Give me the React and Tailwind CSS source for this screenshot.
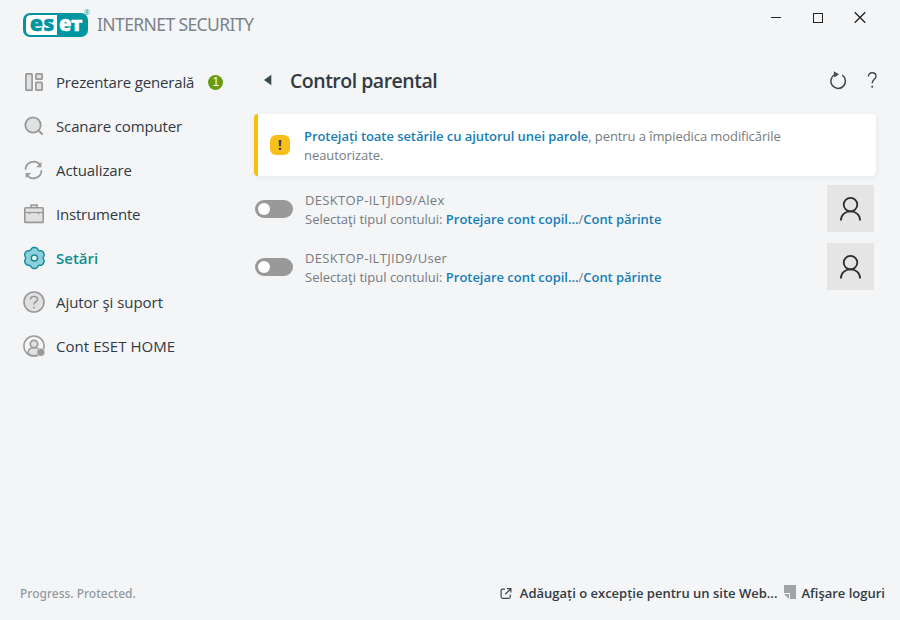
import { useState } from "react";

// six rounded lobes around the settings gear
const gearPoints = Array.from({ length: 72 }, (_, i) => {
  const a = (i * Math.PI) / 36;
  const dip = ((1 - Math.cos(6 * a)) / 2) ** 2;
  const r = 10.5 - 1.8 * dip;
  return `${(11.4 + r * Math.sin(a)).toFixed(2)},${(11 - r * Math.cos(a)).toFixed(2)}`;
}).join(" ");

const OverviewIcon = () => (
  <svg width="22" height="22" viewBox="0 0 22 22" fill="#e0e1e3" stroke="#999" strokeWidth="1.7">
    <rect x="2.9" y="2.9" width="6.2" height="16.2" rx="0.7" />
    <rect x="12.9" y="2.9" width="6.2" height="5.2" rx="0.7" />
    <rect x="12.9" y="11.4" width="6.2" height="7.7" rx="0.7" />
  </svg>
);

const ScanIcon = () => (
  <svg width="22" height="22" viewBox="0 0 22 22" fill="#e0e1e3" stroke="#999" strokeWidth="1.8">
    <circle cx="10" cy="10" r="7.7" />
    <path d="M15.6 15.6L19.6 19.5" strokeWidth="2.1" />
  </svg>
);

const UpdateIcon = () => (
  <svg width="22" height="22" viewBox="0 0 22 22" fill="none" stroke="#999" strokeWidth="1.7">
    <path d="M2.5 10.8A8.2 8.2 0 0 1 17.2 5.9" />
    <path d="M18.5 11.2A8.2 8.2 0 0 1 3.8 16.1" />
    <path d="M18.4 2.9V8.3H13.2Z" fill="#999" stroke="none" />
    <path d="M2.6 19.3V13.9H8.1Z" fill="#999" stroke="none" />
  </svg>
);

const ToolsIcon = () => (
  <svg width="22" height="22" viewBox="0 0 22 22" fill="#e0e1e3" stroke="#999" strokeWidth="1.6">
    <path d="M8 4.7V2H14V4.7" />
    <rect x="1.8" y="4.8" width="18.4" height="14.6" rx="0.7" />
    <path d="M2 9.5H20" strokeWidth="1.2" />
    <path d="M6.5 9V11.3M15.5 9V11.3" strokeWidth="1.4" />
  </svg>
);

const SettingsIcon = () => (
  <svg width="22" height="22" viewBox="0 0 22 22" overflow="visible" stroke="#128c96" strokeWidth="1.4">
    <polygon points={gearPoints} fill="#8bd0da" strokeLinejoin="round" />
    <circle cx="11.4" cy="11" r="3.1" fill="#f3f5f7" strokeWidth="1.5" />
  </svg>
);

const HelpIcon = () => (
  <svg width="22" height="22" viewBox="0 0 22 22" fill="none" stroke="#999" strokeWidth="1.6">
    <circle cx="11" cy="11" r="10" fill="#e0e1e3" />
    <path d="M7.4 8.6C7.4 6.6 8.9 5.5 11 5.5S14.6 6.7 14.6 8.4C14.6 10.8 11 10.7 11 13.4" strokeWidth="1.7" />
    <circle cx="11" cy="16.4" r="1" fill="#999" stroke="none" />
  </svg>
);

const AccountIcon = () => (
  <svg width="22" height="22" viewBox="0 0 22 22" fill="none" stroke="#999" strokeWidth="1.5">
    <circle cx="11" cy="11" r="10.1" />
    <path d="M5 18.5C5 14.6 7.2 12.6 11 12.6S17 14.6 17 18.5C13.4 21.3 8.6 21.3 5 18.5Z" fill="#e0e1e3" />
    <circle cx="11" cy="9" r="3.7" fill="#e0e1e3" strokeWidth="1.7" />
    <circle cx="17.8" cy="17.3" r="4" fill="#999" stroke="#f3f5f7" strokeWidth="0.5" />
  </svg>
);

const menu = [
  { label: "Prezentare generală", icon: OverviewIcon, badge: 1, tracking: "tracking-[-0.15px]" },
  { label: "Scanare computer", icon: ScanIcon, tracking: "tracking-[-0.13px]" },
  { label: "Actualizare", icon: UpdateIcon, tracking: "tracking-[-0.1px]" },
  { label: "Instrumente", icon: ToolsIcon, tracking: "tracking-[-0.2px]" },
  { label: "Setări", icon: SettingsIcon, tracking: "tracking-normal", active: true },
  { label: "Ajutor şi suport", icon: HelpIcon, tracking: "tracking-[-0.05px]" },
  { label: "Cont ESET HOME", icon: AccountIcon, tracking: "tracking-[0.05px]" },
];

const Logo = () => (
  <svg width="69" height="36" viewBox="0 -6 69 36">
    <rect x="0" y="5" width="65" height="24" rx="7" fill="#0096a1" />
    <path d="M8 7H34V27H8Q3 27 3 22V12Q3 7 8 7Z" fill="#fff" />
    <g fontFamily="Open Sans, sans-serif" fontWeight="800" fontSize="21">
      <text x="6.8" y="23" fill="#0096a1" stroke="#0096a1" strokeWidth="0.3" textLength="24.5" lengthAdjust="spacingAndGlyphs">es</text>
      <text x="36" y="23" fill="#fff" stroke="#fff" strokeWidth="0.3" textLength="12.5" lengthAdjust="spacingAndGlyphs">e</text>
      <text x="48" y="23" fill="#fff" stroke="#fff" strokeWidth="0.3" fontSize="16.5" textLength="11.5" lengthAdjust="spacingAndGlyphs">T</text>
    </g>
    <text x="61" y="6.5" fill="#0096a1" fontSize="7" fontFamily="Open Sans, sans-serif">®</text>
  </svg>
);

const Account = ({ name }) => {
  const [on, setOn] = useState(false);

  return (
    <div className="flex h-[47px] items-start">
      <button
        className={`mt-[15px] ml-px flex h-[18px] w-[38px] items-center rounded-full px-[3px] ${
          on ? "justify-end bg-[#0096a1]" : "bg-[#999]"
        }`}
        onClick={() => setOn(!on)}
      >
        <span className="size-3 rounded-full bg-white" />
      </button>
      <div className="ml-3 mt-[6px] text-[13px] leading-[19px] text-[#777b80]">
        <p className="tracking-[0.33px]">{name}</p>
        <p className="whitespace-nowrap">
          <span>Selectaţi tipul contului: </span>
          <a className="font-semibold tracking-[-0.03px] text-[#187eb5]">Protejare cont copil...</a>/
          <a className="font-semibold tracking-[-0.06px] text-[#187eb5]">Cont părinte</a>
        </p>
      </div>
      <div className="ml-auto mr-[2px] flex size-[47px] items-center justify-center bg-[#e5e5e5]">
        <svg width="24" height="26" viewBox="0 0 24 26" fill="none" stroke="#2d2d2d" strokeWidth="1.8">
          <circle cx="11.5" cy="8.6" r="6.8" />
          <path d="M1.9 24.6C1.9 18.8 6 15.4 11.5 15.4S21.1 18.8 21.1 24.6" />
        </svg>
      </div>
    </div>
  );
};

const App = () => {
  return (
    <div className="flex h-[620px] w-[900px] flex-col overflow-hidden bg-[#f3f5f7] font-['Open_Sans',sans-serif] text-[#323a42]">
      <header className="flex h-[60px] items-start">
        <div className="ml-[23px] mt-[2px]">
          <Logo />
        </div>
        <span className="ml-[5px] mt-[9px] whitespace-nowrap font-['Noto_Sans',sans-serif] text-[17.5px] leading-[30px] tracking-[-0.6px] text-[#7b8388]">
          INTERNET SECURITY
        </span>
        <div className="ml-auto mr-[34px] mt-[11px] flex gap-[30px]">
          <svg width="12" height="12" viewBox="0 0 12 12" stroke="#222">
            <path d="M1 6.5H11" />
          </svg>
          <svg width="12" height="12" viewBox="0 0 12 12" fill="none" stroke="#222">
            <rect x="1.5" y="2.5" width="9" height="9" />
          </svg>
          <svg width="12" height="12" viewBox="0 0 12 12" stroke="#222" strokeWidth="1.3">
            <path d="M0.7 1.2L11.3 11.8M11.3 1.2L0.7 11.8" />
          </svg>
        </div>
      </header>

      <div className="flex flex-1">
        <nav className="w-[254px] pl-[23px]">
          {menu.map(({ label, icon: Icon, badge, active, tracking }) => (
            <div key={label} className="flex h-11 items-center">
              <Icon />
              <span
                className={`ml-[11px] whitespace-nowrap text-[15px] ${tracking} ${
                  active ? "font-semibold text-[#128c8c]" : ""
                }`}
              >
                {label}
              </span>
              {badge && (
                <span className="ml-[14px] flex size-[15px] items-center justify-center rounded-full bg-[#669c13] font-['Liberation_Sans',sans-serif] text-[12px] leading-none text-white">
                  {badge}
                </span>
              )}
            </div>
          ))}
        </nav>

        <main className="w-[622px]">
          <div className="flex h-[54px] items-start">
            <svg className="ml-[9px] mt-[14px]" width="9" height="12" viewBox="0 0 9 12">
              <path d="M8.3 0.7V11.3L1 6Z" fill="#3b4850" />
            </svg>
            <h1 className="ml-[18px] mt-[7px] text-[19.5px] leading-7 font-semibold tracking-[-0.5px]">
              Control parental
            </h1>
            <svg className="ml-auto mt-[10px]" width="20" height="21" viewBox="0 0 20 21" fill="none" stroke="#3b4850" strokeWidth="1.5">
              <path d="M14.3 5.1A7.3 7.3 0 1 1 6.6 4.7" />
              <path d="M6.6 2.6L9.6 4.4L7 6.2Z" />
            </svg>
            <svg className="ml-[18px] mt-[10px] -mr-[2px]" width="12" height="20" viewBox="0 0 12 20" fill="none" stroke="#3b4850" strokeWidth="1.4">
              <path d="M2.4 6.5C2.4 4 3.9 2.8 6.2 2.8S10 4.2 10 6.2C10 9.2 6.2 9.3 6.2 13.3" />
              <circle cx="6.2" cy="16.7" r="1" fill="#3b4850" stroke="none" />
            </svg>
          </div>

          <div className="flex h-[62px] items-center rounded-[4px] border-l-4 border-[#fbbf0b] bg-white shadow-[1px_2px_6px_rgba(0,0,0,0.05)]">
            <div className="ml-3 flex size-5 items-center justify-center rounded-[6px] bg-[#f8bf1b]">
              <svg width="4" height="10" viewBox="0 0 4 10" fill="#3c4148">
                <path d="M0.6 0H3.4L2.9 6.5H1.1Z" />
                <rect x="0.8" y="8" width="2.4" height="2" />
              </svg>
            </div>
            <p className="ml-[14px] w-[520px] pt-[2px] text-[13px] leading-[19px] text-[#777b80]">
              <a className="font-semibold tracking-[-0.06px] text-[#187eb5]">
                Protejați toate setările cu ajutorul unei parole
              </a>
              <span className="tracking-[-0.08px]">, pentru a împiedica modificările</span>
              <br />
              <span className="tracking-[-0.06px]">neautorizate.</span>
            </p>
          </div>

          <div className="mt-[9px] flex flex-col gap-[11px]">
            <Account name="DESKTOP-ILTJID9/Alex" />
            <Account name="DESKTOP-ILTJID9/User" />
          </div>
        </main>
      </div>

      <footer className="flex h-[54px] items-center pl-5 pr-[15px] pt-px text-[13px] font-semibold">
        <span className="font-['Noto_Sans',sans-serif] text-[12px] font-medium text-[#929a9f]">
          Progress. Protected.
        </span>
        <svg className="ml-auto" width="12" height="12" viewBox="0 0 12 12" fill="none" stroke="#3b4850" strokeWidth="1.2">
          <path d="M5 1.1H2.6Q1.1 1.1 1.1 2.6V8.8Q1.1 10.3 2.6 10.3H8.8Q10.3 10.3 10.3 8.8V6.5" />
          <path d="M7 0.7H10.9V4.6M10.9 0.7L5.2 6.3" />
        </svg>
        <span className="ml-2 whitespace-nowrap">Adăugați o excepție pentru un site Web...</span>
        <svg className="ml-[7px] mb-[3px]" width="12" height="14" viewBox="0 0 12 14" fill="#a1a4a7">
          <path d="M0 0H12V14H6V8H0Z" />
          <path d="M0 9H5V14Z" />
        </svg>
        <span className="ml-[5px] whitespace-nowrap">Afişare loguri</span>
      </footer>
    </div>
  );
};

export default App;
